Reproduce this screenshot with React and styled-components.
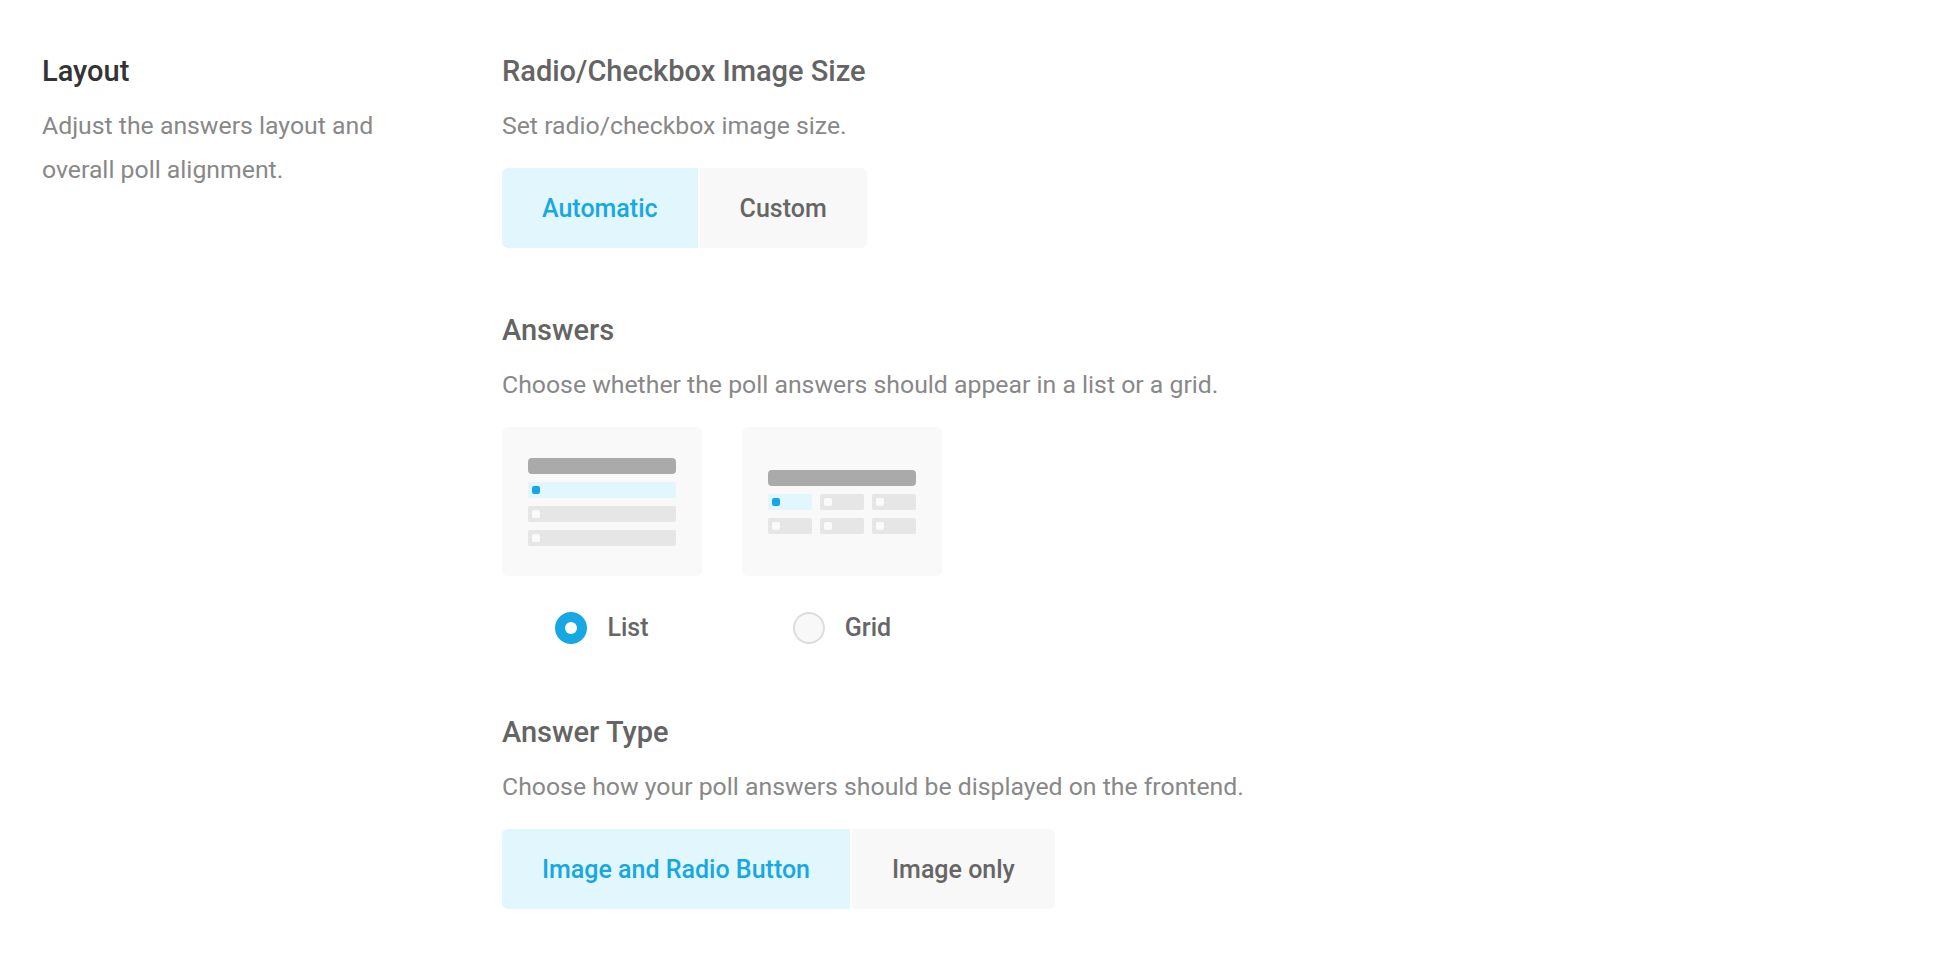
import React, { useState } from "react";
import styled, { createGlobalStyle } from "styled-components";

const GlobalStyle = createGlobalStyle`
  html, body {
    margin: 0;
    padding: 0;
    background: #ffffff;
    font-family: Roboto, "Noto Sans", "Liberation Sans", sans-serif;
    -webkit-font-smoothing: antialiased;
  }
`;

const Page = styled.div`
  display: grid;
  grid-template-columns: 460px 1fr;
  padding: 54px 42px 40px 42px;
`;

const Aside = styled.div`
  display: flex;
  flex-direction: column;
`;

const Main = styled.div`
  display: flex;
  flex-direction: column;
  gap: 65px;
`;

const Section = styled.div`
  display: flex;
  flex-direction: column;
`;

const Title = styled.h2`
  margin: 0 0 16px 0;
  font-size: 29px;
  line-height: 34px;
  font-weight: 500;
  color: ${(p) => (p.$dark ? "#333333" : "#646464")};
`;

const Description = styled.p`
  margin: 0;
  font-size: 24.8px;
  line-height: 44px;
  font-weight: 400;
  color: #888888;
  max-width: ${(p) => (p.$narrow ? "360px" : "none")};
`;

const Segmented = styled.div`
  display: flex;
  align-self: flex-start;
  margin-top: 20px;
  border-radius: 6px;
  overflow: hidden;
  background: #f8f8f8;
`;

const Segment = styled.button`
  height: 80px;
  padding: 0 40px;
  border: none;
  margin: 0;
  font-family: inherit;
  font-size: 25px;
  font-weight: 500;
  cursor: pointer;
  background: ${(p) => (p.$active ? "#e1f6fd" : "#f8f8f8")};
  color: ${(p) => (p.$active ? "#17a8e3" : "#666666")};
  border-right: ${(p) => (p.$active ? "2px solid #ffffff" : "none")};
`;

const Choices = styled.div`
  display: flex;
  gap: 40px;
  margin-top: 20px;
`;

const Choice = styled.div`
  display: flex;
  flex-direction: column;
  align-items: center;
  gap: 34px;
`;

const Preview = styled.div`
  width: 200px;
  height: 149px;
  border-radius: 6px;
  background: #f9f9f9;
  display: flex;
  flex-direction: column;
  justify-content: center;
  align-items: center;
  cursor: pointer;
`;

const Stack = styled.div`
  display: flex;
  flex-direction: column;
  gap: 8px;
  width: 148px;
`;

const HeaderBar = styled.div`
  height: 16px;
  border-radius: 4px;
  background: #aaaaaa;
`;

const Row = styled.div`
  height: 16px;
  border-radius: 2px;
  background: ${(p) => (p.$on ? "#e1f6fd" : "#e6e6e6")};
  display: flex;
  align-items: center;
  padding-left: 4px;
`;

const Cells = styled.div`
  display: grid;
  grid-template-columns: repeat(3, 1fr);
  gap: 8px;
`;

const Dot = styled.span`
  width: 8px;
  height: 8px;
  border-radius: 2px;
  background: ${(p) => (p.$on ? "#17a8e3" : "#ffffff")};
  opacity: ${(p) => (p.$on ? 1 : 0.8)};
`;

const RadioLabel = styled.label`
  display: flex;
  align-items: center;
  gap: 20px;
  margin-bottom: 4px;
  font-size: 25px;
  font-weight: 500;
  line-height: 36px;
  color: #666666;
  cursor: pointer;
`;

const RadioCircle = styled.span`
  box-sizing: border-box;
  width: 32px;
  height: 32px;
  border-radius: 50%;
  display: flex;
  align-items: center;
  justify-content: center;
  background: ${(p) => (p.$on ? "#17a8e3" : "#f8f8f8")};
  border: ${(p) => (p.$on ? "none" : "2px solid #dddddd")};

  &::after {
    content: "";
    display: ${(p) => (p.$on ? "block" : "none")};
    width: 12px;
    height: 12px;
    border-radius: 50%;
    background: #ffffff;
  }
`;

const ListPreview = () => (
  <Stack>
    <HeaderBar />
    <Row $on>
      <Dot $on />
    </Row>
    <Row>
      <Dot />
    </Row>
    <Row>
      <Dot />
    </Row>
  </Stack>
);

const GridPreview = () => (
  <Stack>
    <HeaderBar />
    <Cells>
      {[0, 1, 2, 3, 4, 5].map((i) => (
        <Row key={i} $on={i === 0}>
          <Dot $on={i === 0} />
        </Row>
      ))}
    </Cells>
  </Stack>
);

const SegmentGroup = ({ options, value, onChange }) => (
  <Segmented>
    {options.map((o) => (
      <Segment key={o} $active={value === o} onClick={() => onChange(o)}>
        {o}
      </Segment>
    ))}
  </Segmented>
);

export default function App() {
  const [size, setSize] = useState("Automatic");
  const [layout, setLayout] = useState("list");
  const [type, setType] = useState("Image and Radio Button");

  return (
    <>
      <GlobalStyle />
      <Page>
        <Aside>
          <Title $dark>Layout</Title>
          <Description $narrow>
            Adjust the answers layout and overall poll alignment.
          </Description>
        </Aside>
        <Main>
          <Section>
            <Title>Radio/Checkbox Image Size</Title>
            <Description>Set radio/checkbox image size.</Description>
            <SegmentGroup
              options={["Automatic", "Custom"]}
              value={size}
              onChange={setSize}
            />
          </Section>

          <Section>
            <Title>Answers</Title>
            <Description>
              Choose whether the poll answers should appear in a list or a grid.
            </Description>
            <Choices>
              <Choice>
                <Preview onClick={() => setLayout("list")}>
                  <ListPreview />
                </Preview>
                <RadioLabel onClick={() => setLayout("list")}>
                  <RadioCircle $on={layout === "list"} />
                  List
                </RadioLabel>
              </Choice>
              <Choice>
                <Preview onClick={() => setLayout("grid")}>
                  <GridPreview />
                </Preview>
                <RadioLabel onClick={() => setLayout("grid")}>
                  <RadioCircle $on={layout === "grid"} />
                  Grid
                </RadioLabel>
              </Choice>
            </Choices>
          </Section>

          <Section>
            <Title>Answer Type</Title>
            <Description>
              Choose how your poll answers should be displayed on the frontend.
            </Description>
            <SegmentGroup
              options={["Image and Radio Button", "Image only"]}
              value={type}
              onChange={setType}
            />
          </Section>
        </Main>
      </Page>
    </>
  );
}
